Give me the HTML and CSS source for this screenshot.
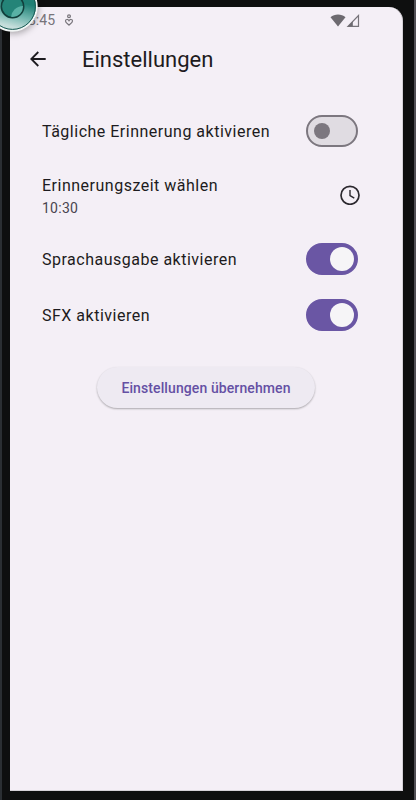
FILE: index.html
```html
<!DOCTYPE html>
<html lang="de">
<head>
    <meta charset="UTF-8">
    <meta name="viewport" content="width=device-width, initial-scale=1.0">
    <title>Einstellungen</title>
    <link rel="stylesheet" href="styles.css">
</head>
<body>
    <div class="phone">
        <div class="screen">
            <div class="status-bar">
                <span class="time">8:45</span>
                <svg class="status-icon" width="10" height="12" viewBox="0 0 10 12">
                    <circle cx="5" cy="2.2" r="1.4"/>
                    <path d="M5 6.800C4 4.900 1.500 5.100 1.500 7c0 1.500 1.900 2.700 3.500 4.100C6.600 9.700 8.500 8.500 8.500 7 8.500 5.100 6 4.900 5 6.800z"/>
                </svg>
                <svg class="signal" width="30" height="13" viewBox="0 0 30 13">
                    <path class="wifi" d="M0.500 3.300C4.500-0.300 11.500-0.300 15.500 3.300L8 12.500z"/>
                    <path class="cell" d="M28.500 1.500v10.800H18z"/>
                    <path class="wifi" d="M22.800 7.300v5H18z"/>
                </svg>
            </div>

            <header>
                <svg class="back" width="16" height="16" viewBox="0 0 16 16">
                    <path d="M15.700 8H1.300M8.300 1L1.300 8l7 7"/>
                </svg>
                <h1>Einstellungen</h1>
            </header>

            <div class="settings">
                <div class="row">
                    <span class="label">Tägliche Erinnerung aktivieren</span>
                    <span class="switch"></span>
                </div>
                <div class="row row-time">
                    <div>
                        <div class="label">Erinnerungszeit wählen</div>
                        <div class="value">10:30</div>
                    </div>
                    <svg class="clock" width="20" height="20" viewBox="0 0 20 20">
                        <circle cx="10" cy="10.300" r="9"/>
                        <path d="M10 5v5.600l4.300 2.500"/>
                    </svg>
                </div>
                <div class="row">
                    <span class="label">Sprachausgabe aktivieren</span>
                    <span class="switch on"></span>
                </div>
                <div class="row">
                    <span class="label">SFX aktivieren</span>
                    <span class="switch on"></span>
                </div>
            </div>

            <button type="button">Einstellungen übernehmen</button>
        </div>
    </div>

    <svg class="badge" width="50" height="46" viewBox="0 0 50 46">
        <defs>
            <linearGradient id="ring" x1="0.6" y1="0.4" x2="0.45" y2="1">
                <stop offset="0" stop-color="#1f7f74"/>
                <stop offset="0.45" stop-color="#6fb5ad"/>
                <stop offset="0.85" stop-color="#c5dedb"/>
            </linearGradient>
            <clipPath id="lens"><circle cx="12.500" cy="6.500" r="10.500"/></clipPath>
        </defs>
        <circle cx="12.500" cy="6.500" r="24.300" fill="url(#ring)" stroke="#f3f7f6" stroke-width="1.800"/>
        <circle cx="12.500" cy="6.500" r="22.900" fill="none" stroke="#185a54" stroke-width="1"/>
        <circle cx="12.500" cy="6.500" r="11.200" fill="#248478" stroke="#123f3c" stroke-width="1.600"/>
        <circle cx="23" cy="18" r="12" fill="#59b1a5" clip-path="url(#lens)"/>
    </svg>
</body>
</html>
```
FILE: styles.css
```css
* {
    box-sizing: border-box;
}

body {
    margin: 0;
    font-family: Roboto, "Liberation Sans", sans-serif;
    background-color: #0e0f0f;
    color: #1d1b20;
}

.phone {
    height: 800px;
    padding: 7px 11px 9px 8px;
    border-left: 2px solid #2b2f33;
    border-right: 2px solid #504f54;
    overflow: hidden;
}

.screen {
    height: 784px;
    background-color: #f4eff6;
    border-radius: 0 14px 0 0;
    border-right: 1px solid #d5d1d7;
    border-bottom: 1px solid #d5d1d7;
    display: flex;
    flex-direction: column;
}

.status-bar {
    height: 26px;
    padding: 0 42px 0 18px;
    display: flex;
    align-items: center;
    color: #77747a;
}

.time {
    font-size: 14px;
    width: 36px;
}

.status-icon {
    fill: none;
    stroke: #77747a;
    stroke-width: 1.2;
}

.signal {
    margin-left: auto;
}

.wifi {
    fill: #6d6a70;
}

.cell {
    fill: none;
    stroke: #77747a;
    stroke-width: 1.2;
}

header {
    height: 52px;
    padding-left: 20px;
    display: flex;
    align-items: center;
}

.back {
    fill: none;
    stroke: #1d1b20;
    stroke-width: 1.8;
}

h1 {
    margin: 0 0 0 36px;
    font-size: 22px;
    font-weight: 400;
}

.settings {
    padding: 18px 44px 0 32px;
}

.row {
    height: 56px;
    display: flex;
    align-items: center;
    justify-content: space-between;
}

.row-time {
    height: 72px;
}

.row-time .clock {
    margin-right: -2px;
}

.label {
    padding-top: 1px;
    font-size: 16px;
    line-height: 24px;
    letter-spacing: 0.5px;
}

.value {
    font-size: 14px;
    line-height: 20px;
    letter-spacing: 0.25px;
    color: #49454f;
}

.switch {
    width: 52px;
    height: 32px;
    padding: 0 6px;
    display: flex;
    align-items: center;
    border: 2px solid #7c777f;
    border-radius: 16px;
    background-color: #e0dce2;
}

.switch::before {
    content: "";
    width: 16px;
    height: 16px;
    border-radius: 50%;
    background-color: #7c777f;
}

.switch.on {
    justify-content: flex-end;
    padding: 0 2px;
    border-color: #6a56a4;
    background-color: #6a56a4;
}

.switch.on::before {
    width: 24px;
    height: 24px;
    background-color: #f6f5f7;
}

.clock {
    fill: none;
    stroke: #2b282e;
    stroke-width: 1.7;
}

.clock path {
    stroke-width: 1.4;
}

button {
    align-self: center;
    width: 218px;
    height: 41px;
    margin-top: 24px;
    border: none;
    border-radius: 21px;
    background-color: #eeeaf2;
    box-shadow: 0 1px 2px rgba(0, 0, 0, 0.3);
    color: #6550a4;
    font-family: inherit;
    font-size: 14px;
    font-weight: 500;
    letter-spacing: 0.1px;
}

/* floating marker over the corner of the phone */
.badge {
    position: absolute;
    top: 0;
    left: 0;
    filter: drop-shadow(1px 2px 3px rgba(0, 0, 0, 0.3));
}
```
